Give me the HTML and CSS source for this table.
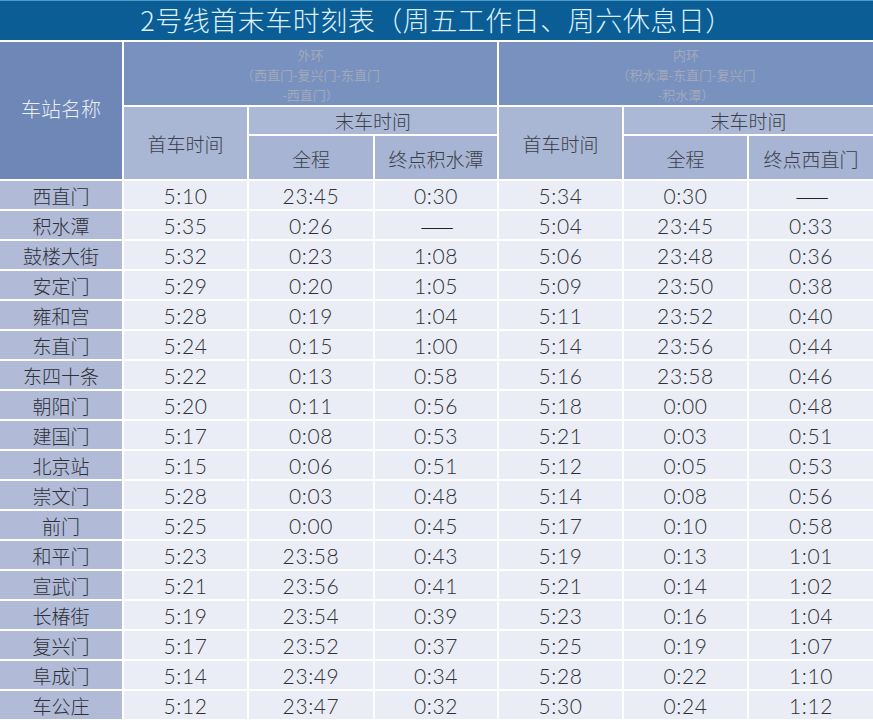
FILE: index.html
```html
<!DOCTYPE html>
<html lang="zh-CN">
<head>
<meta charset="utf-8">
<title>2号线首末车时刻表</title>
<link rel="stylesheet" href="styles.css">
</head>
<body>
<div class="page">
  <div class="title">2号线首末车时刻表（周五工作日、周六休息日）</div>
  <div class="table">
    <div class="h-station">车站名称</div>
    <div class="h-loop span3">外环<br>（西直门-复兴门-东直门<br>-西直门）</div>
    <div class="h-loop span3">内环<br>（积水潭-东直门-复兴门<br>-积水潭）</div>

    <div class="h-sub rows2">首车时间</div>
    <div class="h-sub h-top span2">末车时间</div>
    <div class="h-sub rows2">首车时间</div>
    <div class="h-sub h-top span2">末车时间</div>

    <div class="h-sub h-bot">全程</div>
    <div class="h-sub h-bot">终点积水潭</div>
    <div class="h-sub h-bot">全程</div>
    <div class="h-sub h-bot">终点西直门</div>

    <div class="st">西直门</div><div class="c">5:10</div><div class="c">23:45</div><div class="c">0:30</div><div class="c">5:34</div><div class="c">0:30</div><div class="c dash">——</div>
    <div class="st">积水潭</div><div class="c">5:35</div><div class="c">0:26</div><div class="c dash">——</div><div class="c">5:04</div><div class="c">23:45</div><div class="c">0:33</div>
    <div class="st">鼓楼大街</div><div class="c">5:32</div><div class="c">0:23</div><div class="c">1:08</div><div class="c">5:06</div><div class="c">23:48</div><div class="c">0:36</div>
    <div class="st">安定门</div><div class="c">5:29</div><div class="c">0:20</div><div class="c">1:05</div><div class="c">5:09</div><div class="c">23:50</div><div class="c">0:38</div>
    <div class="st">雍和宫</div><div class="c">5:28</div><div class="c">0:19</div><div class="c">1:04</div><div class="c">5:11</div><div class="c">23:52</div><div class="c">0:40</div>
    <div class="st">东直门</div><div class="c">5:24</div><div class="c">0:15</div><div class="c">1:00</div><div class="c">5:14</div><div class="c">23:56</div><div class="c">0:44</div>
    <div class="st">东四十条</div><div class="c">5:22</div><div class="c">0:13</div><div class="c">0:58</div><div class="c">5:16</div><div class="c">23:58</div><div class="c">0:46</div>
    <div class="st">朝阳门</div><div class="c">5:20</div><div class="c">0:11</div><div class="c">0:56</div><div class="c">5:18</div><div class="c">0:00</div><div class="c">0:48</div>
    <div class="st">建国门</div><div class="c">5:17</div><div class="c">0:08</div><div class="c">0:53</div><div class="c">5:21</div><div class="c">0:03</div><div class="c">0:51</div>
    <div class="st">北京站</div><div class="c">5:15</div><div class="c">0:06</div><div class="c">0:51</div><div class="c">5:12</div><div class="c">0:05</div><div class="c">0:53</div>
    <div class="st">崇文门</div><div class="c">5:28</div><div class="c">0:03</div><div class="c">0:48</div><div class="c">5:14</div><div class="c">0:08</div><div class="c">0:56</div>
    <div class="st">前门</div><div class="c">5:25</div><div class="c">0:00</div><div class="c">0:45</div><div class="c">5:17</div><div class="c">0:10</div><div class="c">0:58</div>
    <div class="st">和平门</div><div class="c">5:23</div><div class="c">23:58</div><div class="c">0:43</div><div class="c">5:19</div><div class="c">0:13</div><div class="c">1:01</div>
    <div class="st">宣武门</div><div class="c">5:21</div><div class="c">23:56</div><div class="c">0:41</div><div class="c">5:21</div><div class="c">0:14</div><div class="c">1:02</div>
    <div class="st">长椿街</div><div class="c">5:19</div><div class="c">23:54</div><div class="c">0:39</div><div class="c">5:23</div><div class="c">0:16</div><div class="c">1:04</div>
    <div class="st">复兴门</div><div class="c">5:17</div><div class="c">23:52</div><div class="c">0:37</div><div class="c">5:25</div><div class="c">0:19</div><div class="c">1:07</div>
    <div class="st">阜成门</div><div class="c">5:14</div><div class="c">23:49</div><div class="c">0:34</div><div class="c">5:28</div><div class="c">0:22</div><div class="c">1:10</div>
    <div class="st">车公庄</div><div class="c">5:12</div><div class="c">23:47</div><div class="c">0:32</div><div class="c">5:30</div><div class="c">0:24</div><div class="c">1:12</div>
  </div>
</div>
</body>
</html>
```

FILE: styles.css
```css
html, body {
  margin: 0;
  padding: 0;
  background: #ffffff;
}

.page {
  width: 873px;
  height: 722px;
  overflow: hidden;
  background: #ffffff;
  font-family: "Noto Sans CJK SC", "Noto Sans", sans-serif;
}

.title {
  height: 39px;
  border-top: 1px solid #4d9ccc;
  background: #0b5d96;
  color: #dcf0fa;
  font-size: 27px;
  font-weight: 300;
  line-height: 38px;
  text-align: center;
  letter-spacing: 0.5px;
}

.table {
  margin-top: 2px;
  display: grid;
  grid-template-columns: 122px 123px 124px 122px 123px 123px 124px;
  grid-template-rows: 63px 27px 43px repeat(18, 28px);
  gap: 2px;
  background: #ffffff;
}

.table > div {
  display: flex;
  align-items: center;
  justify-content: center;
  text-align: center;
}

.h-station {
  grid-row: span 3;
  background: #6f87b6;
  color: #e9eef7;
  font-size: 20px;
  font-weight: 300;
  padding-bottom: 4px;
}

.span3 {
  grid-column: span 3;
}

.span2 {
  grid-column: span 2;
}

.rows2 {
  grid-row: span 2;
}

.h-loop {
  background: #7891be;
  color: #a2a9bc;
  font-size: 13px;
  line-height: 20px;
  padding-top: 2px;
}

.h-sub {
  background: #a9b6d4;
  color: #3b3f48;
  font-size: 19px;
  font-weight: 300;
}

.h-top {
  background: #abb8d6;
}

.h-bot {
  background: #a7b4d3;
  padding-top: 2px;
}

.st {
  background: #b1bbd7;
  color: #2e3036;
  font-size: 19px;
  font-weight: 300;
}

.c {
  background: #eaedf5;
  color: #2e3036;
  font-family: "Lato", "Noto Sans", sans-serif;
  font-size: 21px;
  font-weight: 300;
  letter-spacing: 0.6px;
}

.dash {
  font-family: "Noto Sans CJK SC", sans-serif;
  font-size: 20px;
  font-weight: 300;
  letter-spacing: -2px;
  color: #222;
}
```
